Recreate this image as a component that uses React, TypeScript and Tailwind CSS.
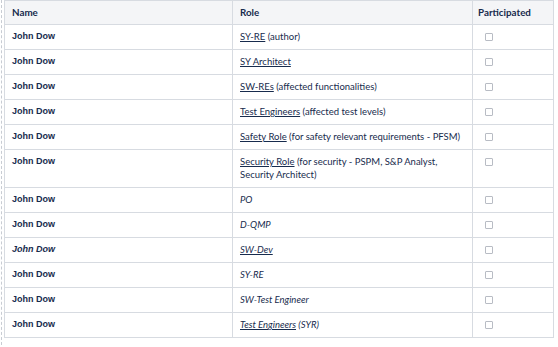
import React from 'react';

type Row = {
  name: string;
  nameItalic?: boolean;
  role: React.ReactNode;
  tall?: boolean;
};

const Link = ({ children }: { children: React.ReactNode }) => (
  <span className="underline decoration-[#172b4d] underline-offset-[1px]">{children}</span>
);

const rows: Row[] = [
  { name: 'John Dow', role: <><Link>SY-RE</Link> (author)</> },
  { name: 'John Dow', role: <Link>SY Architect</Link> },
  { name: 'John Dow', role: <><Link>SW-REs</Link> (affected functionalities)</> },
  { name: 'John Dow', role: <><Link>Test Engineers</Link> (affected test levels)</> },
  { name: 'John Dow', role: <><Link>Safety Role</Link> (for safety relevant requirements - PFSM)</> },
  {
    name: 'John Dow',
    tall: true,
    role: (
      <>
        <Link>Security Role</Link> (for security - PSPM, S&amp;P Analyst,
        <br />
        Security Architect)
      </>
    ),
  },
  { name: 'John Dow', role: <i>PO</i> },
  { name: 'John Dow', role: <i>D-QMP</i> },
  { name: 'John Dow', nameItalic: true, role: <i><Link>SW-Dev</Link></i> },
  { name: 'John Dow', role: <i>SY-RE</i> },
  { name: 'John Dow', role: <i>SW-Test Engineer</i> },
  { name: 'John Dow', role: <i><Link>Test Engineers</Link> (SYR)</i> },
];

export default function App() {
  return (
    <div className="w-[558px] h-[347px] bg-white overflow-hidden">
      <div className="ml-[1px] h-[345px] border-l border-dashed border-[#c8ccd3] pl-[2px]">
        <table
          className="w-[549px] border-collapse table-fixed text-[9.8px] leading-[13px] text-[#172b4d]"
          style={{ fontFamily: 'Lato, "Open Sans", sans-serif' }}
        >
          <colgroup>
            <col className="w-[228px]" />
            <col className="w-[240px]" />
            <col className="w-[81px]" />
          </colgroup>
          <thead>
            <tr className="bg-[#f4f5f7] h-[24px]">
              <th className="border border-[#d7dbe1] text-left font-bold px-[7px] py-0 align-middle">Name</th>
              <th className="border border-[#d7dbe1] text-left font-bold px-[7px] py-0 align-middle">Role</th>
              <th className="border border-[#d7dbe1] text-left font-bold px-[5px] py-0 align-middle">Participated</th>
            </tr>
          </thead>
          <tbody>
            {rows.map((r, i) => (
              <tr key={i} className={r.tall ? 'h-[37px]' : 'h-[25px]'}>
                <td
                  className={`border border-[#d7dbe1] px-[7px] pt-[5px] pb-[6px] align-top font-bold text-[9px] ${
                    r.nameItalic ? 'italic' : ''
                  }`}
                  style={{ fontFamily: '"Liberation Sans", Arial, sans-serif' }}
                >
                  {r.name}
                </td>
                <td className="border border-[#d7dbe1] pl-[7px] pr-[2px] pt-[5px] pb-[6px] align-top whitespace-nowrap text-[9.5px]">
                  {r.role}
                </td>
                <td className="border border-[#d7dbe1] px-[12px] pt-[8px] pb-[6px] align-top">
                  <div className="w-[8px] h-[8px] border border-[#b8bcc4] rounded-[1px] bg-white" />
                </td>
              </tr>
            ))}
          </tbody>
        </table>
      </div>
    </div>
  );
}
